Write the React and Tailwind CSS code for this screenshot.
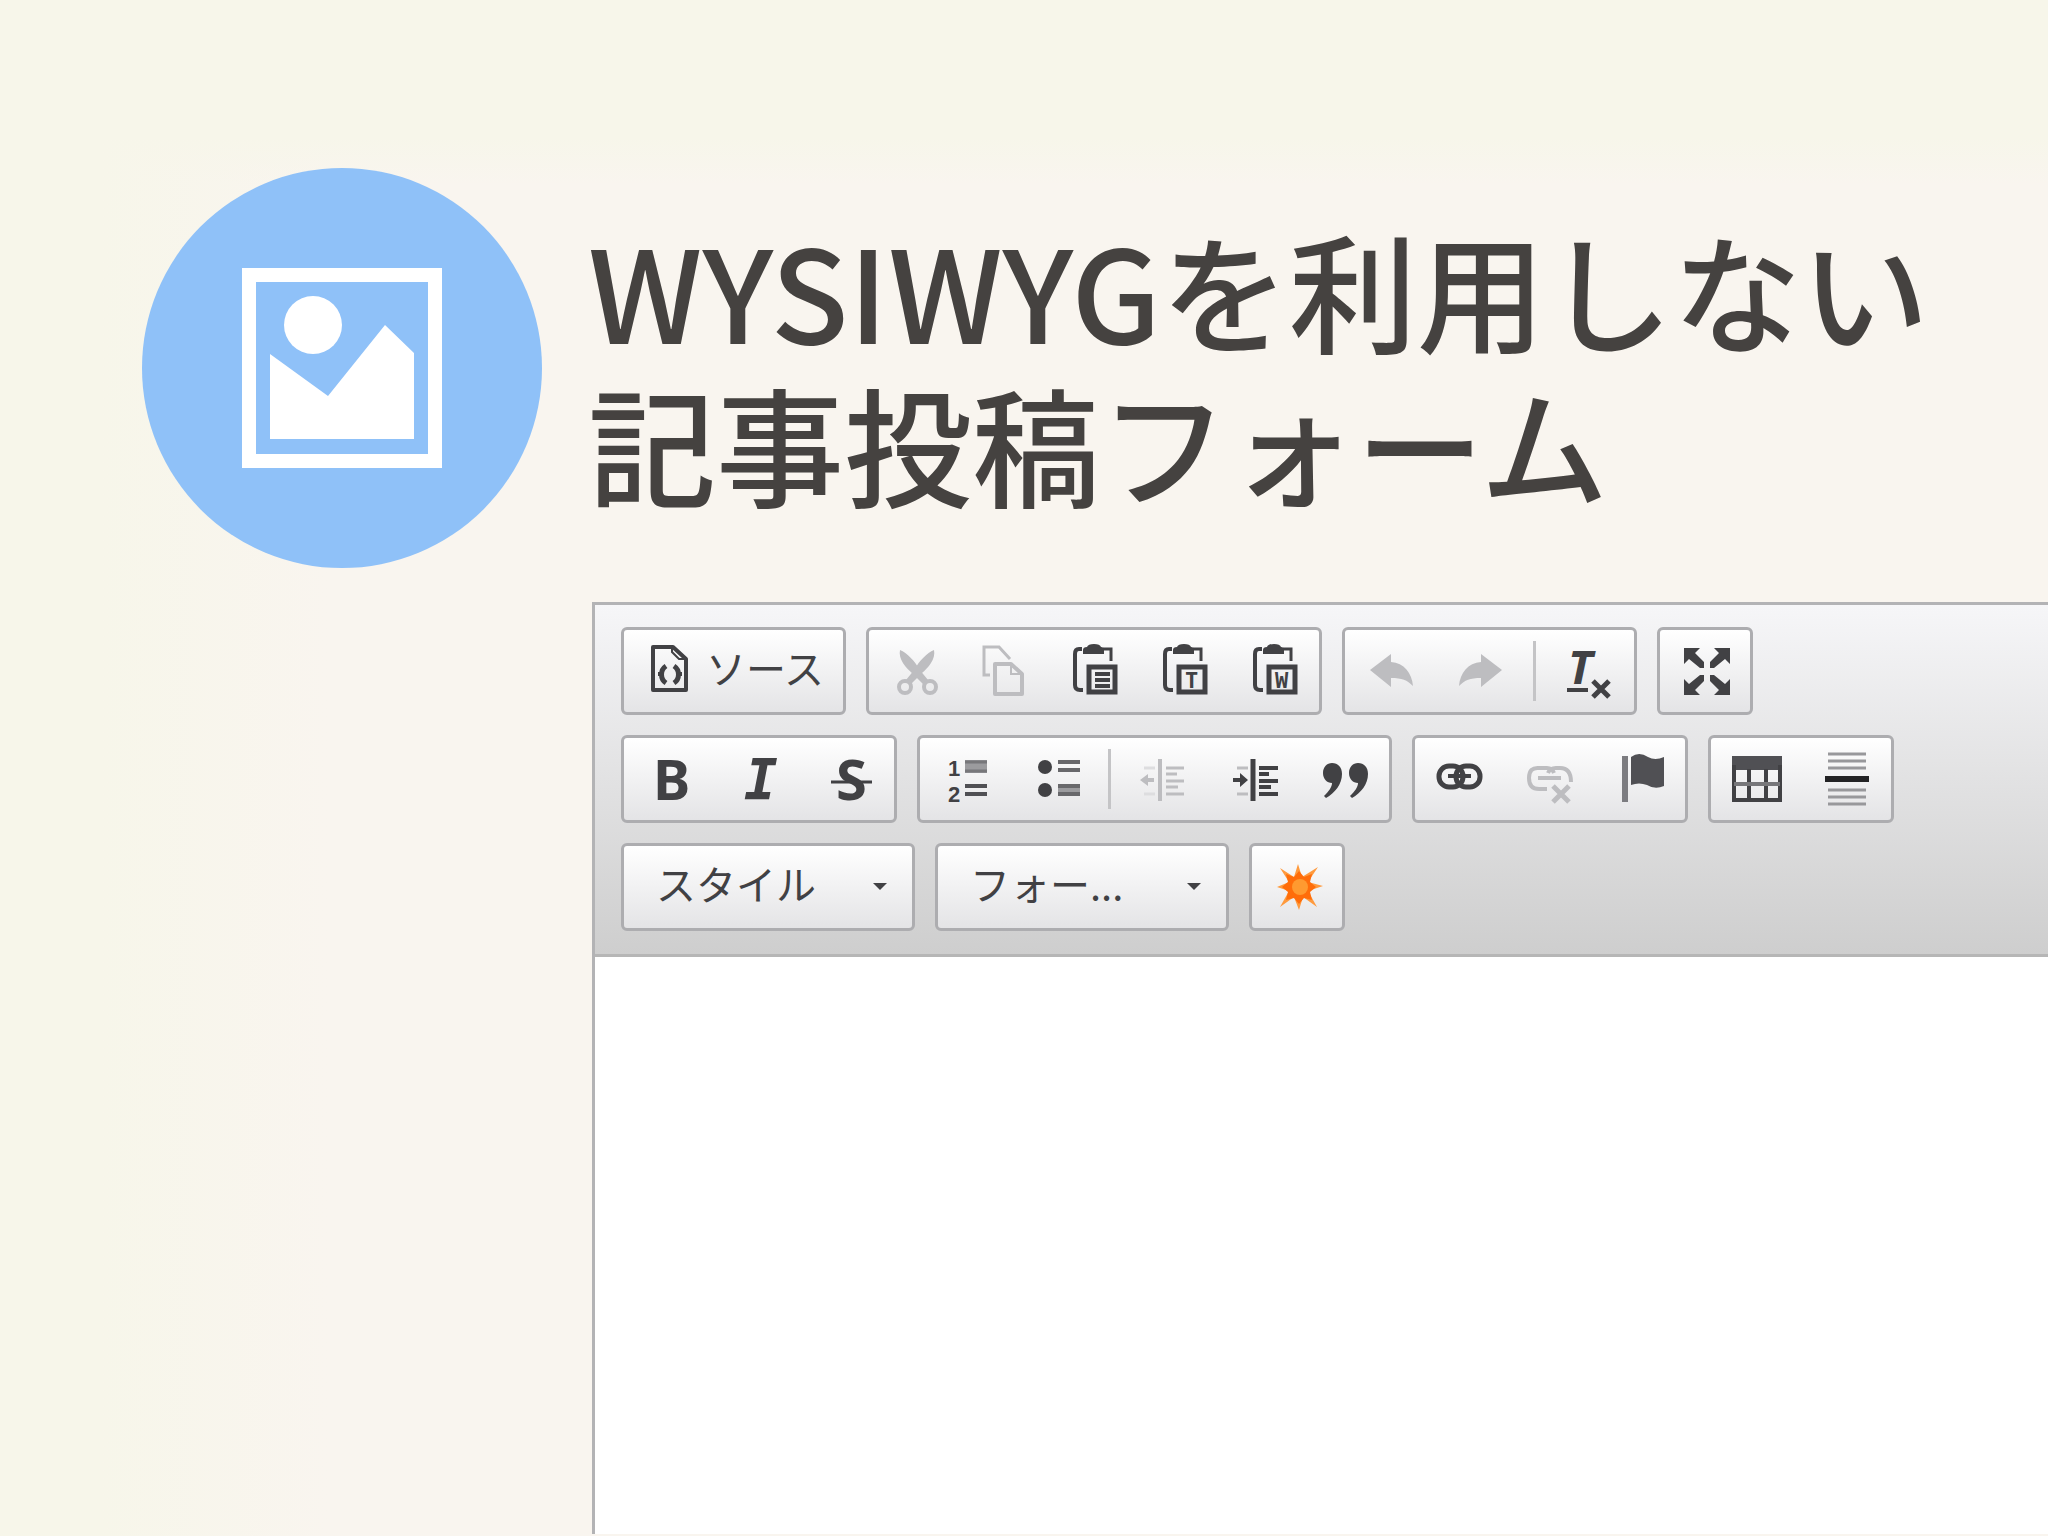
import React, { useState } from 'react';

const DARK = '#414144';
const MUTED = '#bdbdc0';

function Icon({ children }) {
    return (
        <svg className="w-12 h-12 shrink-0 overflow-visible" viewBox="0 0 48 48" fill="none" aria-hidden="true">
            {children}
        </svg>
    );
}

function SourceIcon() {
    return (
        <Icon>
            <path d="M7 0h20l13 12v31H7z" stroke={DARK} strokeWidth="4" strokeLinejoin="round" />
            <path d="M26 1v4l7 7h6" stroke={DARK} strokeWidth="2" />
            <path d="M20 19c-6 4-6 13 0 17M28 19c6 4 6 13 0 17" stroke={DARK} strokeWidth="5" />
            <path d="M16 27h-4M32 27h4" stroke={DARK} strokeWidth="4" />
        </Icon>
    );
}

function CutIcon() {
    return (
        <Icon>
            <path d="M10 3c-2 9 6 18 13 24l10 10 5-4-9-11C25 14 17 6 10 3z" fill={MUTED} />
            <path d="M44 3c2 9-6 18-12 23L21 37l-5-4 9-11C29 14 37 6 44 3z" fill={MUTED} />
            <circle cx="15" cy="40" r="6" stroke={MUTED} strokeWidth="4" />
            <circle cx="40" cy="40" r="6" stroke={MUTED} strokeWidth="4" />
        </Icon>
    );
}

function CopyIcon() {
    return (
        <Icon>
            <path d="M10 28H4V0h15l11 12" stroke={MUTED} strokeWidth="3" />
            <path d="M15 17h16l11 10v20H15z" stroke={MUTED} strokeWidth="4" strokeLinejoin="round" />
            <path d="M31 18v9h10" stroke={MUTED} strokeWidth="2" />
        </Icon>
    );
}

function PasteIcon({ children }) {
    return (
        <Icon>
            <path d="M12 2H9Q5 2 5 7v31q0 5 5 5h3" stroke={DARK} strokeWidth="4" />
            <path d="M33 2h8v12" stroke={DARK} strokeWidth="3" />
            <path d="M13 7V3q0-3 4-3 1-3 7-3t7 3q3 0 3 3v4z" fill={DARK} />
            <rect x="19" y="20" width="26" height="25" stroke={DARK} strokeWidth="5" />
            {children}
        </Icon>
    );
}

function UndoIcon() {
    return (
        <Icon>
            <path d="M4 23 25 7v8c13 1 21 11 22 24-6-6-11-8-22-8v9z" fill={MUTED} />
        </Icon>
    );
}

function RedoIcon() {
    return (
        <Icon>
            <path d="M46 23 25 7v8C12 16 4 26 3 39c6-6 11-8 22-8v9z" fill={MUTED} />
        </Icon>
    );
}

function RemoveFormatIcon() {
    return (
        <Icon>
            <text x="3" y="37" fontSize="46" fill={DARK} className="font-['Noto_Sans'] font-bold italic">T</text>
            <path d="M2 43h21" stroke={DARK} strokeWidth="4" />
            <path d="m28 34 16 16M44 34 28 50" stroke={DARK} strokeWidth="5" />
        </Icon>
    );
}

function MaximizeIcon() {
    return (
        <Icon>
            <g fill={DARK}>
                <path d="M3 1h16l-5 5 9 9v6h-4l-11-9-5 5z" />
                <path d="M49 1H33l5 5-9 9v6h4l11-9 5 5z" />
                <path d="M3 48h16l-5-5 9-9v-6h-4L8 37l-5-5z" />
                <path d="M49 48H33l5-5-9-9v-6h4l11 9 5-5z" />
            </g>
        </Icon>
    );
}

function BoldIcon() {
    return (
        <Icon>
            <text x="8" y="45" fontSize="56" fill={DARK} className="font-['Noto_Sans'] font-bold">B</text>
        </Icon>
    );
}

function ItalicIcon() {
    return (
        <Icon>
            <text x="9" y="45" fontSize="56" fill={DARK} className="font-['DejaVu_Sans_Mono'] font-bold italic">I</text>
        </Icon>
    );
}

function StrikeIcon() {
    return (
        <Icon>
            <text x="11" y="45" fontSize="56" fill={DARK} className="font-['Noto_Sans'] font-bold">S</text>
            <path d="M6 27h41" stroke={DARK} strokeWidth="3" />
        </Icon>
    );
}

function NumberedListIcon() {
    return (
        <Icon>
            <g fill={DARK} fontSize="22" className="font-['Liberation_Sans'] font-bold">
                <text x="7" y="21">1</text>
                <text x="7" y="47">2</text>
            </g>
            <path d="M24 5h22v13H24z" fill="#9b9b9e" />
            <path d="M24 7h22M24 16h22" stroke="#77777a" strokeWidth="3" />
            <path d="M24 31h22M24 39h22" stroke="#505054" strokeWidth="4" />
        </Icon>
    );
}

function BulletListIcon() {
    return (
        <Icon>
            <circle cx="14" cy="12" r="7" fill={DARK} />
            <circle cx="14" cy="35" r="7" fill={DARK} />
            <path d="M27 29h22v12H27z" fill="#9b9b9e" />
            <path d="M27 7h22M27 15h22M27 31h22M27 39h22" stroke="#68686b" strokeWidth="4" />
        </Icon>
    );
}

function OutdentIcon() {
    return (
        <Icon>
            <path d="M20 4v42" stroke={MUTED} strokeWidth="4" />
            <path d="M0 25l8-6v4h6v4H8v4z" fill={MUTED} />
            <path d="M26 13h18M26 19h11M26 26h18M26 32h12M26 39h18" stroke={MUTED} strokeWidth="3" />
            <path d="M4 13h11M4 39h11" stroke="#dddddf" strokeWidth="3" />
        </Icon>
    );
}

function IndentIcon() {
    return (
        <Icon>
            <path d="M23 4v42" stroke={DARK} strokeWidth="5" />
            <path d="M18 25l-8-7v5H3v4h7v5z" fill={DARK} />
            <path d="M29 13h19M29 19h10M29 26h19M29 32h12M29 39h19" stroke={DARK} strokeWidth="4" />
            <path d="M7 13h11M7 39h11" stroke={MUTED} strokeWidth="3" />
        </Icon>
    );
}

function QuoteIcon() {
    const mark = 'M12 8c6 0 10 4 10 11 0 10-7 19-16 24l-2-2c5-5 8-9 8-13-5 0-9-4-9-10S7 8 12 8z';
    return (
        <Icon>
            <path d={mark} fill={DARK} />
            <path d={mark} fill={DARK} transform="translate(26 0)" />
        </Icon>
    );
}

function LinkIcon() {
    return (
        <Icon>
            <rect x="3" y="11" width="24" height="21" rx="10" stroke={DARK} strokeWidth="5" />
            <rect x="20" y="11" width="24" height="21" rx="10" stroke={DARK} strokeWidth="5" />
            <path d="M12 21h23" stroke={DARK} strokeWidth="4" />
        </Icon>
    );
}

function UnlinkIcon() {
    return (
        <Icon>
            <path d="M21 34h-8Q3 34 3 23t10-10h8q5 0 7 5" stroke={MUTED} strokeWidth="4" />
            <path d="M22 18q2-5 8-5h4q11 0 11 14" stroke={MUTED} strokeWidth="4" />
            <path d="M12 23h23" stroke={MUTED} strokeWidth="4" />
            <path d="m27 31 16 16M43 31 27 47" stroke={MUTED} strokeWidth="5" />
        </Icon>
    );
}

function FlagIcon() {
    return (
        <Icon>
            <path d="M9 1v46" stroke="#7c7c80" strokeWidth="6" />
            <path d="M15 2q8-6 17 0 7 4 16 0v29q-9 4-17-1-8-3-16 0z" fill="#505054" />
        </Icon>
    );
}

function TableIcon() {
    return (
        <Icon>
            <path d="M0 1h50v14H0z" fill="#505054" />
            <path d="M2 10v35h46V10M17 14v31M34 14v31" stroke={DARK} strokeWidth="4" />
            <path d="M2 29h46" stroke="#77777a" strokeWidth="4" />
        </Icon>
    );
}

function RuleIcon() {
    return (
        <Icon>
            <path d="M6-1h38M6 6h38M6 13h38M6 35h38M6 42h38M6 49h38" stroke="#98989b" strokeWidth="3" />
            <path d="M3 24h44" stroke="#232325" strokeWidth="6" />
        </Icon>
    );
}

function BurstIcon() {
    return (
        <Icon>
            <path d="M25 1l4 13L45 4 35 19l15 4-15 5 9 16-14-10-4 13-5-13L7 44l9-16-12-4 12-5L7 5l14 9z" fill="#ff9a3d" />
            <path d="M26 8l5 6 8-3-2 8 6 5-6 5 2 8-8-2-5 6-5-6-8 2 2-8-6-5 6-5-2-8 8 3z" fill="#ff6d0a" />
            <circle cx="27" cy="24" r="8" fill="#ff9a30" />
        </Icon>
    );
}

function Group({ children }) {
    return (
        <div className="flex items-center h-[88px] rounded-md border-3 border-[#adadb0] bg-linear-to-b from-white to-[#e4e4e6]">
            {children}
        </div>
    );
}

function ToolButton({ label, disabled, children }) {
    return (
        <button type="button" aria-label={label} disabled={disabled} className="flex w-[90px] h-full items-center justify-center">
            {children}
        </button>
    );
}

function Separator() {
    return <span className="mx-2 h-[60px] w-[3px] bg-[#c4c4c6]" />;
}

function Combo({ label, text }) {
    return (
        <div className="relative flex items-center w-[294px] h-[88px] rounded-md border-3 border-[#adadb0] bg-linear-to-b from-white to-[#e4e4e6]">
            <select
                aria-label={label}
                className="w-full h-full appearance-none bg-transparent pl-8 pb-2 text-[40px] leading-[60px] text-[#414144] outline-none"
            >
                <option>{text}</option>
            </select>
            <svg className="absolute right-6 w-4 h-2 pointer-events-none" viewBox="0 0 16 8" aria-hidden="true">
                <path d="M1 0h14L8 7z" fill={DARK} />
            </svg>
        </div>
    );
}

function Toolbar() {
    return (
        <div
            role="toolbar"
            aria-label="エディタツールバー"
            className="flex flex-col gap-5 pl-[26px] pt-[22px] pb-[23px] border-b-3 border-[#b6b6b6] bg-linear-to-b from-[#f6f6f8] to-[#cecece]"
        >
            <div className="flex gap-5">
                <Group>
                    <button type="button" className="flex w-[219px] h-full items-center gap-3 pl-[22px] text-[40px] leading-[60px] text-[#414144]">
                        <SourceIcon />
                        <span className="pb-2">ソース</span>
                    </button>
                </Group>
                <Group>
                    <ToolButton label="切り取り" disabled><CutIcon /></ToolButton>
                    <ToolButton label="コピー" disabled><CopyIcon /></ToolButton>
                    <ToolButton label="貼り付け">
                        <PasteIcon>
                            <path d="M25 27h15M25 33h15M25 39h15" stroke={DARK} strokeWidth="4" />
                        </PasteIcon>
                    </ToolButton>
                    <ToolButton label="プレーンテキスト貼り付け">
                        <PasteIcon>
                            <text x="25" y="41" fontSize="22" fill={DARK} className="font-['DejaVu_Sans_Mono'] font-bold">T</text>
                        </PasteIcon>
                    </ToolButton>
                    <ToolButton label="ワード文章から貼り付け">
                        <PasteIcon>
                            <text x="25" y="41" fontSize="22" fill={DARK} className="font-['DejaVu_Sans_Mono'] font-bold">W</text>
                        </PasteIcon>
                    </ToolButton>
                </Group>
                <Group>
                    <ToolButton label="元に戻す" disabled><UndoIcon /></ToolButton>
                    <ToolButton label="やり直す" disabled><RedoIcon /></ToolButton>
                    <Separator />
                    <ToolButton label="書式を解除"><RemoveFormatIcon /></ToolButton>
                </Group>
                <Group>
                    <ToolButton label="最大化"><MaximizeIcon /></ToolButton>
                </Group>
            </div>

            <div className="flex gap-5">
                <Group>
                    <ToolButton label="太字"><BoldIcon /></ToolButton>
                    <ToolButton label="斜体"><ItalicIcon /></ToolButton>
                    <ToolButton label="打ち消し線"><StrikeIcon /></ToolButton>
                </Group>
                <Group>
                    <ToolButton label="番号付きリスト"><NumberedListIcon /></ToolButton>
                    <ToolButton label="番号無しリスト"><BulletListIcon /></ToolButton>
                    <Separator />
                    <ToolButton label="インデント解除" disabled><OutdentIcon /></ToolButton>
                    <ToolButton label="インデント"><IndentIcon /></ToolButton>
                    <ToolButton label="ブロック引用文"><QuoteIcon /></ToolButton>
                </Group>
                <Group>
                    <ToolButton label="リンク挿入"><LinkIcon /></ToolButton>
                    <ToolButton label="リンクを削除" disabled><UnlinkIcon /></ToolButton>
                    <ToolButton label="アンカー挿入"><FlagIcon /></ToolButton>
                </Group>
                <Group>
                    <ToolButton label="表"><TableIcon /></ToolButton>
                    <ToolButton label="水平線"><RuleIcon /></ToolButton>
                </Group>
            </div>

            <div className="flex gap-5">
                <Combo label="スタイル" text="スタイル" />
                <Combo label="フォーマット" text="フォー..." />
                <Group>
                    <ToolButton label="挿入"><BurstIcon /></ToolButton>
                </Group>
            </div>
        </div>
    );
}

export default function App() {
    const [body, setBody] = useState('');

    return (
        <div className="flex flex-col min-h-screen overflow-hidden pb-0.5 bg-[#f9f5ef] bg-[linear-gradient(to_bottom,#f7f6ea_9%,transparent_12%),linear-gradient(to_right,#f7f6ea_5%,transparent_16%)] font-['Noto_Sans_CJK_JP',sans-serif]">
            <header className="flex items-center gap-[46px] pl-[142px] pt-[168px]">
                <svg className="w-[400px] h-[400px] shrink-0" viewBox="0 0 400 400" aria-hidden="true">
                    <circle cx="200" cy="200" r="200" fill="#8fc1f8" />
                    <rect x="107" y="107" width="186" height="186" fill="none" stroke="#fff" strokeWidth="14" />
                    <circle cx="171" cy="157" r="29" fill="#fff" />
                    <path d="M128 186l58 42 57-71 29 28v86H128z" fill="#fff" />
                </svg>
                <h1 className="pb-1 text-[128px] leading-[154px] font-medium text-[#454240] whitespace-nowrap">
                    WYSIWYGを利用しない<br />
                    記事投稿フォーム
                </h1>
            </header>

            <main className="flex flex-col flex-1 ml-[592px] mt-[34px] border-t-3 border-l-3 border-[#b3b3b5] bg-white">
                <Toolbar />
                <textarea
                    aria-label="本文"
                    value={body}
                    onChange={(e) => setBody(e.target.value)}
                    className="flex-1 w-full resize-none bg-white p-6 text-[40px] leading-[60px] outline-none"
                />
            </main>
        </div>
    );
}
